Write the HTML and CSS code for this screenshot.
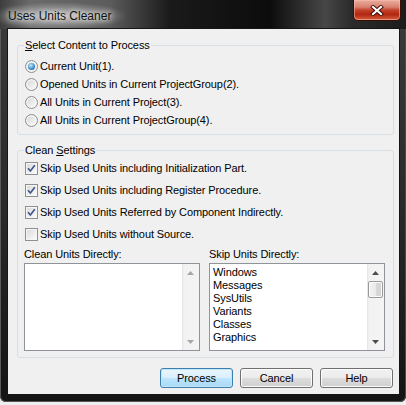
FILE: index.html
```html
<!DOCTYPE html>
<html>
<head>
<meta charset="utf-8">
<link rel="stylesheet" href="styles.css">
</head>
<body>
<div class="window">
  <div class="titlebar">
    <span class="title">Uses Units Cleaner</span>
    <div class="close">
      <svg width="14" height="11" viewBox="0 0 14 11">
        <path d="M3 2 L11 9 M11 2 L3 9" stroke="#3a0a04" stroke-width="4" stroke-linecap="square" fill="none"/>
        <path d="M3 2 L11 9 M11 2 L3 9" stroke="#ffffff" stroke-width="2.2" stroke-linecap="square" fill="none"/>
      </svg>
    </div>
  </div>
  <div class="client">
    <fieldset class="group g1">
      <legend><u>S</u>elect Content to Process</legend>
      <div class="opt"><span class="radio on"></span>Current Unit(1).</div>
      <div class="opt"><span class="radio"></span>Opened Units in Current ProjectGroup(2).</div>
      <div class="opt"><span class="radio"></span>All Units in Current Project(3).</div>
      <div class="opt"><span class="radio"></span>All Units in Current ProjectGroup(4).</div>
    </fieldset>
    <fieldset class="group g2">
      <legend>Clean <u>S</u>ettings</legend>
      <div class="chkrow"><span class="check"><svg width="11" height="11" viewBox="0 0 11 11"><path d="M2 5.2 L4.4 8 L8.8 2.2" stroke="#42588c" stroke-width="1.7" fill="none"/></svg></span>Skip Used Units including Initialization Part.</div>
      <div class="chkrow"><span class="check"><svg width="11" height="11" viewBox="0 0 11 11"><path d="M2 5.2 L4.4 8 L8.8 2.2" stroke="#42588c" stroke-width="1.7" fill="none"/></svg></span>Skip Used Units including Register Procedure.</div>
      <div class="chkrow"><span class="check"><svg width="11" height="11" viewBox="0 0 11 11"><path d="M2 5.2 L4.4 8 L8.8 2.2" stroke="#42588c" stroke-width="1.7" fill="none"/></svg></span>Skip Used Units Referred by Component Indirectly.</div>
      <div class="chkrow"><span class="check"></span>Skip Used Units without Source.</div>
      <div class="lists">
        <div class="col">
          <div class="lbl">Clean Units Directly:</div>
          <div class="listbox">
            <div class="items"></div>
            <div class="vscroll disabled">
              <div class="sbtn"><svg width="7" height="4" viewBox="0 0 7 4"><path d="M0 4 L3.5 0 L7 4 Z"/></svg></div>
              <div class="track"></div>
              <div class="sbtn"><svg width="7" height="4" viewBox="0 0 7 4"><path d="M0 0 L7 0 L3.5 4 Z"/></svg></div>
            </div>
          </div>
        </div>
        <div class="col">
          <div class="lbl">Skip Units Directly:</div>
          <div class="listbox">
            <div class="items">
              <div class="item">Windows</div>
              <div class="item">Messages</div>
              <div class="item">SysUtils</div>
              <div class="item">Variants</div>
              <div class="item">Classes</div>
              <div class="item">Graphics</div>
            </div>
            <div class="vscroll">
              <div class="sbtn"><svg width="7" height="4" viewBox="0 0 7 4"><path d="M0 4 L3.5 0 L7 4 Z"/></svg></div>
              <div class="track"><div class="thumb"></div></div>
              <div class="sbtn"><svg width="7" height="4" viewBox="0 0 7 4"><path d="M0 0 L7 0 L3.5 4 Z"/></svg></div>
            </div>
          </div>
        </div>
      </div>
    </fieldset>
    <div class="buttons">
      <div class="btn default">Process</div>
      <div class="btn">Cancel</div>
      <div class="btn">Help</div>
    </div>
  </div>
</div>
</body>
</html>
```
FILE: styles.css
```css
* { box-sizing: border-box; }
html, body { margin: 0; padding: 0; }
body {
  background: #eeeeee;
  font-family: "Liberation Sans", Arial, sans-serif;
  font-size: 11px;
  letter-spacing: -0.1px;
  color: #000;
}
.window {
  width: 406px;
  height: 402px;
  border-radius: 0 0 6px 6px;
  background: linear-gradient(180deg, #3c3c3c 0, #2a2a2a 50%, #141414 100%);
  box-shadow: inset 1px 0 0 #5a5a5a, inset -1px 0 0 #4a4a4a, inset 0 -1px 0 #555;
  display: flex;
  flex-direction: column;
}
.titlebar {
  height: 29px;
  display: flex;
  justify-content: space-between;
  align-items: flex-start;
  background:
    radial-gradient(ellipse 70px 14px at 58px 16px, rgba(255,255,255,0.55), rgba(255,255,255,0) 100%),
    linear-gradient(90deg, #3e3e3e 0, #6a6a6a 30px, #5c5c5c 110px, #1a1a1a 170px, #0c0c0c 270px, #474747 325px, #2a2a2a 352px, #1c1c1c 406px);
}
.title {
  padding: 9px 0 0 8px;
  line-height: 14px;
  font-size: 12px;
  letter-spacing: 0;
  color: #111;
  text-shadow: 0 0 5px #fff, 0 0 9px rgba(255,255,255,0.9);
}
.close {
  width: 48px;
  height: 21px;
  margin-right: 5px;
  border: 1px solid #3b0d06;
  border-top: none;
  border-radius: 0 0 5px 5px;
  background: linear-gradient(180deg, #e9ad9f 0, #d98270 35%, #c4432c 50%, #b2260f 72%, #d5603f 100%);
  box-shadow: inset 0 0 0 1px rgba(255, 190, 175, 0.55);
  display: flex;
  align-items: center;
  justify-content: center;
}
.client {
  margin-left: 8px;
  width: 391px;
  height: 365px;
  background: #f0f0f0;
  box-shadow: 0 0 0 1px #151515;
  padding: 9px 5px 0 9px;
}
.group {
  margin: 0;
  min-inline-size: 0;
  border: 1px solid #d5dfe5;
  border-radius: 3px;
}
.group legend {
  padding: 0 1px;
  margin-left: -1px;
  line-height: 14px;
  height: 14px;
}
.g1 { padding: 5px 8px 5px 7px; }
.g2 { margin-top: 8px; padding: 0 8px 6px 7px; }
.opt, .chkrow {
  display: flex;
  align-items: center;
  white-space: nowrap;
}
.opt { height: 18px; }
.chkrow { height: 22px; }
.radio {
  width: 13px;
  height: 13px;
  margin-right: 2px;
  flex: none;
  border: 1px solid #8e8f8f;
  border-radius: 50%;
  background: linear-gradient(135deg, #cfcfcf 0, #ececec 55%, #fbfbfb 100%);
  box-shadow: inset 0 0 0 1.5px #f4f4f4;
  position: relative;
}
.radio.on::after {
  content: "";
  position: absolute;
  left: 2px;
  top: 2px;
  width: 7px;
  height: 7px;
  border-radius: 50%;
  background: radial-gradient(circle at 40% 35%, #c9eefc 0, #4c9ad6 50%, #144a7e 100%);
}
.check {
  width: 13px;
  height: 13px;
  margin-right: 2px;
  flex: none;
  border: 1px solid #8e8f8f;
  background: linear-gradient(135deg, #d8d8d8 0, #ededed 55%, #fdfdfd 100%);
  box-shadow: inset 0 0 0 1px #f6f6f6;
  display: flex;
  align-items: center;
  justify-content: center;
}
.check svg { display: block; }
.lists {
  display: grid;
  grid-template-columns: 176px 176px;
  column-gap: 9px;
  margin: 2px 0 0 -1px;
}
.lbl {
  height: 14px;
  line-height: 14px;
  margin-bottom: 2px;
  white-space: nowrap;
}
.listbox {
  height: 88px;
  border: 1px solid #8f939a;
  background: #fff;
  display: flex;
}
.items {
  flex: 1;
  padding: 2px 3px;
  overflow: hidden;
}
.item {
  height: 13px;
  line-height: 13px;
  white-space: nowrap;
}
.vscroll {
  width: 17px;
  flex: none;
  display: flex;
  flex-direction: column;
  background: linear-gradient(90deg, #e4e4e4 0, #f2f2f2 2px, #f4f4f4 100%);
}
.sbtn {
  height: 17px;
  display: flex;
  align-items: center;
  justify-content: center;
}
.sbtn svg { display: block; fill: #4c4c4c; }
.vscroll.disabled .sbtn svg { fill: #a6a6a6; }
.track { flex: 1; padding: 0 1px; }
.thumb {
  height: 17px;
  border: 1px solid #9a9a9a;
  border-radius: 2px;
  background: linear-gradient(90deg, #f4f4f4 0, #eaeaea 50%, #dadada 50%, #d2d2d2 100%);
  box-shadow: inset 0 0 0 1px #fbfbfb;
}
.buttons {
  display: flex;
  justify-content: flex-end;
  gap: 7px;
  margin-top: 10px;
  padding-right: 1px;
}
.btn {
  width: 73px;
  height: 20px;
  line-height: 18px;
  text-align: center;
  border: 1px solid #707070;
  border-radius: 3px;
  background: linear-gradient(180deg, #f2f2f2 0, #ebebeb 48%, #dddddd 52%, #cfcfcf 100%);
  box-shadow: inset 0 0 0 1px #fcfcfc;
}
.btn.default {
  border-color: #3c7fb1;
  background: linear-gradient(180deg, #eaf6fd 0, #d9f0fc 48%, #bee6fd 52%, #a7d9f5 100%);
  box-shadow: inset 0 0 0 1px #c4e5f6;
}
```
